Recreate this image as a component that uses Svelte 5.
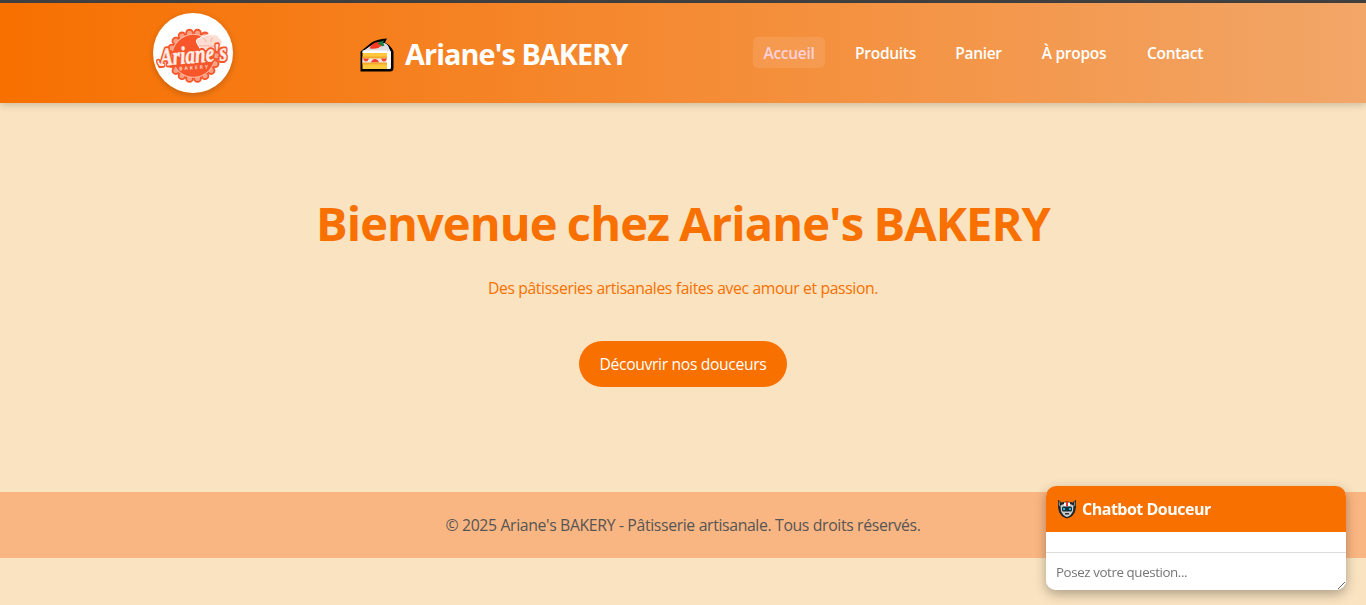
<script>
  const links = [
    { label: 'Accueil', width: 72, active: true },
    { label: 'Produits', width: 81 },
    { label: 'Panier', width: 65 },
    { label: 'À propos', width: 86 },
    { label: 'Contact', width: 76 },
  ];
  const scallops = Array.from({ length: 18 }, (_, i) => {
    const a = (i * Math.PI) / 9;
    return { x: 40.5 + 23 * Math.cos(a), y: 42.8 + 23 * Math.sin(a) };
  });
</script>

<div class="page">
  <header>
    <svg class="logo" viewBox="0 0 80 80" role="img" aria-label="Ariane's Bakery">
      <circle cx="40" cy="40" r="40" fill="#fff" />
      {#each scallops as s}
        <circle cx={s.x} cy={s.y} r="3.4" fill="#f9a084" stroke="#f6562a" stroke-width="1.8" />
      {/each}
      <circle cx="40.5" cy="42.8" r="22" fill="#ffb9a4" />
      <circle cx="40.5" cy="42.8" r="21" fill="#f6562a" />
      <path d="M45 32q-4-6 2-7 1-3 5-2 4-3 8-1 5-1 6 3 6 3 1 8l1 4q-12-2-20 0z" fill="#fddcd2" stroke="#fff" stroke-width="1" />
      <path d="M46 33q8-1 19 1M50 25q3 1 3 4M60 25q-3 1-2 4" fill="none" stroke="#f4a794" stroke-width=".8" />
      <g transform="rotate(-5 40 44)">
        <text class="script outline" x="7" y="50" textLength="67" lengthAdjust="spacingAndGlyphs">Ariane's</text>
        <path d="M9 49q-4 0-4-4" fill="none" stroke="#f6562a" stroke-width="4.500" stroke-linecap="round" />
        <path d="M10 49q-5 1-5-4" fill="none" stroke="#ffeee9" stroke-width="1.800" stroke-linecap="round" />
        <text class="script" x="7" y="50" textLength="67" lengthAdjust="spacingAndGlyphs">Ariane's</text>
      </g>
      <text class="tiny" x="26" y="56.500" textLength="29" transform="rotate(-4 40 55)">BAKERY</text>
    </svg>

    <h1>
      <svg class="cake" viewBox="0 0 34 34" aria-hidden="true">
        <path d="M0.500 33.500V13.500L11 5q5-4 16-4.500l-2 4q6 3 8.500 9V30q0 3.500-3.500 3.500z" fill="#000" />
        <path d="M3 14L12 7q12-5 16 1l3 6v15q0 2-2 2h-3V15z" fill="#f5f5f4" />
        <path d="M3 13L12 7q12-5 16 1l2 5z" fill="#dfe0e2" />
        <path d="M2.500 14H27v17H2.500z" fill="#ffc83d" />
        <path d="M2.500 12.500H27V15H2.500z" fill="#fff" />
        <path d="M2.500 18.500H27v2H2.500z" fill="#f4a928" />
        <path d="M2.500 20.500H27V25H2.500z" fill="#eee5e3" />
        <path d="M3 20.500h6q-1 3-3 3t-3-3zM11 24.500q1-3.500 4-3.500t4 3.500zM21 20.500h6q-1 3-3 3t-3-3z" fill="#f4402d" />
        <path d="M2.500 24.500H27v2H2.500z" fill="#f4a928" />
        <path d="M27 13.500h4V29q0 2-2 2h-2z" fill="#fff" />
        <path d="M9.500 10.500q3-7 9.500-6.500l3 3q-4 5-12.500 3.500z" fill="#f83b20" />
        <path d="M19 4l5-1.500-1 2 1.500 3-2.500 1-2-2-2-.5z" fill="#168344" />
      </svg>
      <span>Ariane's BAKERY</span>
    </h1>

    <nav>
      {#each links as link}
        <a href="#top" class:active={link.active} style="width: {link.width}px">{link.label}</a>
      {/each}
    </nav>
  </header>

  <main>
    <h2>Bienvenue chez Ariane's BAKERY</h2>
    <p>Des pâtisseries artisanales faites avec amour et passion.</p>
    <button>Découvrir nos douceurs</button>
  </main>

  <footer><span>© 2025 Ariane's BAKERY - Pâtisserie artisanale. Tous droits réservés.</span></footer>

  <aside>
    <div class="chat-head">
      <svg viewBox="0 0 20 20" aria-hidden="true">
        <path d="M1.500 1.500V8l1 5q2 5 7.500 6 5.500-1 7.500-6l1-5V1.500L15.500 4q-5.500-2-11 0z" fill="#24282b" stroke="#222" stroke-linejoin="round" />
        <path d="M3.500 6.500q6.500-4 13 0L16 12q-2 5-6 6-4-1-6-6z" fill="#c8cbd0" />
        <path d="M2.300 2.500V7M17.700 2.500V7" stroke="#999" stroke-width="1" />
        <path d="M7 3.500h6V7H7z" fill="#fff" />
        <path d="M9 3h2v4H9z" fill="#ed3325" />
        <rect x="5" y="7.500" width="10" height="5" rx="1.500" fill="#142f38" />
        <path d="M6 9h2v2H6zM12 9h2v2h-2z" fill="#19b9ea" />
        <path d="M8 14h4v1.500H8z" fill="#333" />
      </svg>
      <span>Chatbot Douceur</span>
    </div>
    <div class="messages"></div>
    <textarea placeholder="Posez votre question..."></textarea>
  </aside>
</div>

<style>
  :global(body) {
    margin: 0;
    background: #f9e3c1;
    overflow: hidden;
  }
  .page {
    height: 605px;
    box-sizing: border-box;
    border-top: 3px solid #424242;
    font: 16px/24px "Open Sans", "Noto Sans", sans-serif;
  }
  header {
    height: 100px;
    padding: 0 153px;
    box-sizing: border-box;
    display: flex;
    align-items: center;
    background: linear-gradient(90deg, #f77000, #f2a668);
    box-shadow: 0 2px 8px rgba(0, 0, 0, 0.18);
  }
  .logo {
    width: 80px;
    height: 80px;
    flex: none;
    border-radius: 50%;
    overflow: visible;
    box-shadow: 0 2px 6px rgba(0, 0, 0, 0.2);
  }
  .script {
    font: italic bold 25px "Liberation Serif", serif;
    fill: #ffeee9;
    stroke: #ffeee9;
    stroke-width: 0.5px;
  }
  .outline {
    stroke: #f6562a;
    stroke-width: 4.5px;
    stroke-linejoin: round;
  }
  .tiny {
    font: bold 5px "Open Sans", sans-serif;
    fill: #ffd1c3;
  }
  h1 {
    margin: 0 0 0 127px;
    width: 268px;
    flex: none;
    display: flex;
    align-items: center;
    gap: 11px;
    color: #fff;
    font-size: 28.8px;
    line-height: 38px;
    letter-spacing: -0.9px;
    white-space: nowrap;
  }
  h1 span {
    padding-top: 2px;
  }
  .cake {
    width: 34px;
    height: 34px;
    flex: none;
    margin-top: 3px;
  }
  nav {
    display: flex;
    gap: 20px;
    margin: -1px 0 0 125px;
  }
  nav a {
    box-sizing: border-box;
    height: 31px;
    border-radius: 5px;
    color: #fff;
    font-size: 15.5px;
    font-weight: 600;
    line-height: 33px;
    letter-spacing: -0.3px;
    text-align: center;
    text-decoration: none;
    white-space: nowrap;
  }
  nav .active {
    color: #ffd1dc;
    background: rgba(255, 255, 255, 0.1);
  }
  main {
    height: 389px;
    padding-top: 88px;
    box-sizing: border-box;
    display: flex;
    flex-direction: column;
    align-items: center;
    color: #f77000;
  }
  h2 {
    margin: 0;
    font-size: 47px;
    line-height: 64px;
    letter-spacing: -0.9px;
    word-spacing: -1px;
    white-space: nowrap;
  }
  p {
    margin: 21px 0 0;
    font-size: 15.7px;
    letter-spacing: -0.35px;
  }
  button {
    width: 208px;
    height: 46px;
    margin-top: 41px;
    padding: 0;
    border: 0;
    border-radius: 23px;
    background: #f77000;
    color: #fff;
    font: 15.7px/24px "Open Sans", sans-serif;
    letter-spacing: -0.35px;
  }
  footer {
    height: 66px;
    display: flex;
    align-items: center;
    justify-content: center;
    background: #fab682;
    color: #555;
    font-size: 15.8px;
    letter-spacing: -0.36px;
  }
  aside {
    position: fixed;
    right: 20px;
    bottom: 15px;
    width: 300px;
    height: 104px;
    border-radius: 10px;
    overflow: hidden;
    background: #fff;
    box-shadow: 0 4px 12px rgba(0, 0, 0, 0.3);
  }
  .chat-head {
    height: 46px;
    padding-left: 11px;
    display: flex;
    align-items: center;
    gap: 5px;
    background: #f77000;
    color: #fff;
    font-weight: 700;
    letter-spacing: -0.5px;
  }
  .chat-head svg {
    width: 20px;
    height: 20px;
  }
  .messages {
    height: 20px;
  }
  textarea {
    display: block;
    width: 300px;
    height: 38px;
    box-sizing: border-box;
    padding: 10px;
    border: 0;
    border-top: 1px solid #ddd;
    outline: 0;
    overflow: hidden;
    resize: vertical;
    font: 13.33px/18px "Open Sans", sans-serif;
    letter-spacing: -0.4px;
  }
  textarea::placeholder {
    color: #757575;
  }
</style>
